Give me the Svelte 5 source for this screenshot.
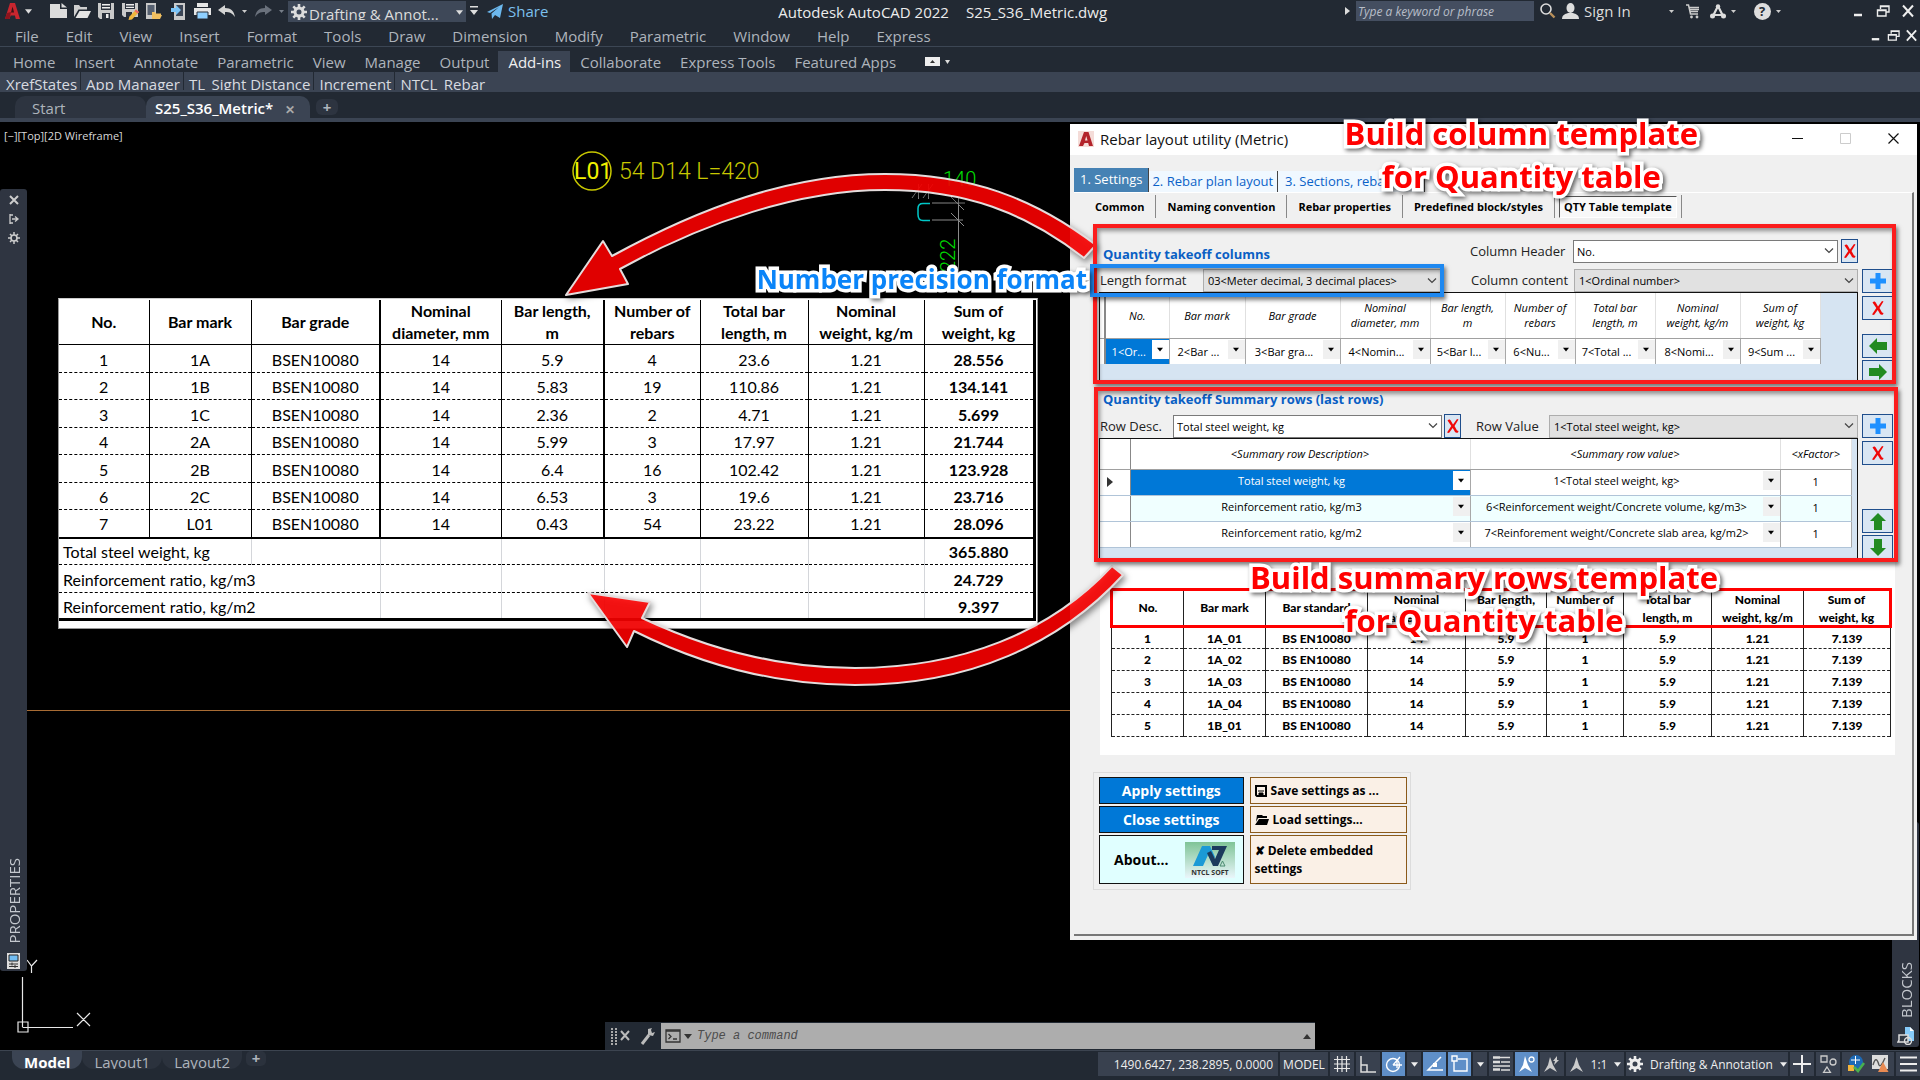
<script lang="ts">
	const menus = ['File', 'Edit', 'View', 'Insert', 'Format', 'Tools', 'Draw', 'Dimension', 'Modify', 'Parametric', 'Window', 'Help', 'Express'];
	const ribbonTabs = ['Home', 'Insert', 'Annotate', 'Parametric', 'View', 'Manage', 'Output', 'Add-ins', 'Collaborate', 'Express Tools', 'Featured Apps'];
	const panels = ['XrefStates', 'App Manager', 'TL_Sight Distance', 'Increment', 'NTCL_Rebar'];

	const quantityHeads = ['No.', 'Bar mark', 'Bar grade', 'Nominal\ndiameter, mm', 'Bar length,\nm', 'Number of\nrebars', 'Total bar\nlength, m', 'Nominal\nweight, kg/m', 'Sum of\nweight, kg'];
	const quantityRows = [
		['1', '1A', 'BSEN10080', '14', '5.9', '4', '23.6', '1.21', '28.556'],
		['2', '1B', 'BSEN10080', '14', '5.83', '19', '110.86', '1.21', '134.141'],
		['3', '1C', 'BSEN10080', '14', '2.36', '2', '4.71', '1.21', '5.699'],
		['4', '2A', 'BSEN10080', '14', '5.99', '3', '17.97', '1.21', '21.744'],
		['5', '2B', 'BSEN10080', '14', '6.4', '16', '102.42', '1.21', '123.928'],
		['6', '2C', 'BSEN10080', '14', '6.53', '3', '19.6', '1.21', '23.716'],
		['7', 'L01', 'BSEN10080', '14', '0.43', '54', '23.22', '1.21', '28.096']
	];
	const summaryRows = [
		{ label: 'Total steel weight, kg', value: '365.880', span: 2 },
		{ label: 'Reinforcement ratio, kg/m3', value: '24.729', span: 3 },
		{ label: 'Reinforcement ratio, kg/m2', value: '9.397', span: 3 }
	];

	const columnContents = ['1<Or...', '2<Bar ...', '3<Bar gra...', '4<Nomin...', '5<Bar l...', '6<Nu...', '7<Total ...', '8<Nomi...', '9<Sum ...'];
	const columnWidths = [64, 76, 95, 90, 75, 70, 80, 85, 80];
	const templateRows = [
		{ desc: 'Total steel weight, kg', value: '1<Total steel weight, kg>' },
		{ desc: 'Reinforcement ratio, kg/m3', value: '6<Reinforcement weight/Concrete volume, kg/m3>' },
		{ desc: 'Reinforcement ratio, kg/m2', value: '7<Reinforement weight/Concrete slab area, kg/m2>' }
	];

	const previewMarks = ['1A_01', '1A_02', '1A_03', '1A_04', '1B_01'];
</script>

<svelte:head>
	<title>Autodesk AutoCAD 2022 - S25_S36_Metric.dwg</title>
</svelte:head>

{#snippet caret()}
	<svg class="caret" width="8" height="5" viewBox="0 0 8 5"><path d="M0 0h8L4 5z" fill="currentColor" /></svg>
{/snippet}

{#snippet chevron()}
	<svg class="chevron" width="10" height="6" viewBox="0 0 10 6"><path d="M1 0.5l4 4 4-4" fill="none" stroke="#444" stroke-width="1.200" /></svg>
{/snippet}

{#snippet gear(size: number)}
	<svg width={size} height={size} viewBox="0 0 16 16">
		<circle cx="8" cy="8" r="4" fill="none" stroke="currentColor" stroke-width="3" />
		<path d="M8 0v4M8 12v4M0 8h4M12 8h4M2.3 2.3l3 3M10.7 10.7l3 3M2.3 13.7l3-3M10.7 5.3l3-3" stroke="currentColor" stroke-width="2.6" />
	</svg>
{/snippet}

{#snippet cross()}
	<svg width="14" height="16" viewBox="0 0 14 16"><path d="M1.500 2.500C3 1 4 1 5 3l2 3.500L11 1l1.500.5L8.500 8l2.500 4.500 1.500.5-.5 1.500c-2 .5-3 0-3.500-1.500L6.700 10 3 15l-2-.5L5.300 8z" fill="#f00808" /></svg>
{/snippet}

{#snippet windowButtons(size: number)}
	<button aria-label="Minimize"><svg width={size} height={size} viewBox="0 0 14 14"><path d="M3 11h8" stroke="#eee" stroke-width="2.500" /></svg></button>
	<button aria-label="Restore"><svg width={size} height={size} viewBox="0 0 14 14"><path d="M4.500 5V2H13v6h-3M1.500 6H10v6H1.500zM1 6.500h9M4 2.500h9" fill="none" stroke="#eee" stroke-width="1.400" /></svg></button>
	<button aria-label="Close"><svg width={size} height={size} viewBox="0 0 14 14"><path d="M2 1.500l10 11M12 1.500l-10 11" stroke="#eee" stroke-width="2" /></svg></button>
{/snippet}

<div class="app">
	<header class="titlebar">
		<div class="quick">
			<button class="logo" aria-label="Application menu">
				<svg width="15" height="16" viewBox="0 0 15 16"><path d="M5 0h5l5 16h-4.200l-.9-3.500H5.700L4.500 16H0z" fill="#c8262f" /><path d="M7.500 3.500l1.600 6H6z" fill="#3a1216" /><path d="M0 16l2-6 4-1-1.500 7z" fill="#8d141d" /></svg>
				{@render caret()}
			</button>
			<button aria-label="New"><svg width="17" height="16" viewBox="0 0 17 16"><path d="M0 1h10v5h7v9H0z" fill="#dcdcdc" /><path d="M11.500 0v4.500H17z" fill="#dcdcdc" /></svg></button>
			<button aria-label="Open"><svg width="17" height="16" viewBox="0 0 17 16"><path d="M0 14V2h5l1.500 2H13v2.500H4.500z" fill="#cfcfcf" /><path d="M5.500 8H17l-3.500 7H1.500z" fill="#e4e4e4" /></svg></button>
			<button aria-label="Save"><svg width="16" height="16" viewBox="0 0 16 16"><path d="M0 0h16v16H2l-2-2z" fill="#c9c9c9" /><path d="M3 0h10v7H3zM4 10h8v6H4z" fill="#2a303b" /><path d="M4 1h8v1.500H4zM4 4h8v1.500H4zM8 11h2.500v4H8z" fill="#eee" /></svg></button>
			<button aria-label="Save as"><svg width="17" height="17" viewBox="0 0 17 17"><path d="M0 0h16v14H2l-2-2z" fill="#c9c9c9" /><path d="M3 0h10v6H3zM4 9h6v5H4z" fill="#2a303b" /><path d="M4 1h8v1.500H4zM4 3.800h8V5H4z" fill="#eee" /><path d="M14 6.500l3 2.500-7 7.500-3.500.5.8-3.300z" fill="#f0b63d" /><path d="M14 6.500l3 2.500-1.500 1.600-3-2.500z" fill="#e66" /></svg></button>
			<button aria-label="Open from mobile"><svg width="16" height="17" viewBox="0 0 16 17"><path d="M0 0h10v16H0z" fill="#c9c9c9" /><path d="M1.500 2h7v10h-7z" fill="#566070" /><path d="M6 16V9h3l1 1.500h5V12l1 0-2 4z" fill="#f2c060" /></svg></button>
			<button aria-label="Save to mobile"><svg width="14" height="17" viewBox="0 0 14 17"><path d="M3 0h11v17H3z" fill="#c9c9c9" /><path d="M5 2h7v11H5z" fill="#3c4656" /><path d="M0 5h5V2l5 5-5 5V9H0z" fill="#7cc4f7" /></svg></button>
			<button aria-label="Plot"><svg width="17" height="16" viewBox="0 0 17 16"><path d="M3 0h11v4H3zM0 5h17v7H0z" fill="#e6e6e6" /><path d="M3 9h11v7H3z" fill="#8fd0ff" stroke="#2a303b" /></svg></button>
			<button aria-label="Undo"><svg width="17" height="12" viewBox="0 0 17 12"><path d="M7 0v3c6 0 9 3 10 9-3-4-5-5-10-5v3L0 5z" fill="#d4d4d4" /></svg></button>
			<span class="tiny">{@render caret()}</span>
			<button class="faded" aria-label="Redo"><svg width="17" height="12" viewBox="0 0 17 12"><path d="M10 0v3C4 3 1 6 0 12c3-4 5-5 10-5v3l7-5z" fill="#6a717c" /></svg></button>
			<span class="tiny faded">{@render caret()}</span>
			<div class="workspace">
				{@render gear(16)}
				<select aria-label="Workspace"><option>Drafting &amp; Annot...</option></select>
				{@render caret()}
			</div>
			<svg class="more" width="8" height="10" viewBox="0 0 8 10"><path d="M0 0h8v1.500H0zM0 4h8L4 9z" fill="#ddd" /></svg>
			<a class="share" href="#share">
				<svg width="16" height="15" viewBox="0 0 16 15"><path d="M0 8L16 0l-3 14-5-3-3 4-.5-5.500L12 3 3 9z" fill="#6cb8ee" /></svg>
				Share
			</a>
		</div>
		<div class="doc-title"><span>Autodesk AutoCAD 2022</span><span>S25_S36_Metric.dwg</span></div>
		<div class="account">
			<svg width="5" height="8" viewBox="0 0 5 8"><path d="M0 0l5 4-5 4z" fill="#ddd" /></svg>
			<input type="text" aria-label="Search help" placeholder="Type a keyword or phrase" />
			<svg width="16" height="16" viewBox="0 0 16 16"><circle cx="6" cy="6" r="5" fill="none" stroke="#ddd" stroke-width="1.600" /><path d="M10 10l4.500 4.500" stroke="#b9905a" stroke-width="2.400" /></svg>
			<a class="signin" href="#signin">
				<svg width="17" height="16" viewBox="0 0 17 16"><ellipse cx="8.500" cy="5" rx="4" ry="5" fill="#ddd" /><path d="M0 16c0-4 3-5 6-6h5c3 1 6 2 6 6z" fill="#ddd" /></svg>
				Sign In
			</a>
			<span class="tiny user-menu">{@render caret()}</span>
			<svg width="14" height="15" viewBox="0 0 14 15"><path d="M0 1h2.500l2 9H12M3.500 3.500H13M4 5.500h9M4.500 7.500H12" fill="none" stroke="#ccc" stroke-width="1.500" /><circle cx="5.500" cy="13" r="1.400" fill="#ccc" /><circle cx="11" cy="13" r="1.400" fill="#ccc" /></svg>
			<svg class="apps" width="16" height="15" viewBox="0 0 16 15"><path d="M8 2L3 12M8 2l5 10M4 11l9 0" stroke="#ddd" stroke-width="2.200" /><circle cx="8" cy="2.500" r="2.200" fill="#ddd" /><circle cx="2.500" cy="12" r="2.500" fill="#ddd" /><circle cx="13.500" cy="12" r="2.500" fill="#ddd" /></svg>
			<span class="tiny">{@render caret()}</span>
			<span class="help">?</span>
			<span class="tiny">{@render caret()}</span>
			<div class="winbtns">{@render windowButtons(14)}</div>
		</div>
	</header>

	<nav class="menubar">
		{#each menus as item (item)}
			<a href="#menu">{item}</a>
		{/each}
		<div class="winbtns small">{@render windowButtons(13)}</div>
	</nav>

	<nav class="ribbon">
		{#each ribbonTabs as tab (tab)}
			<a href="#ribbon" class:active={tab === 'Add-ins'}>{tab}</a>
		{/each}
		<svg width="28" height="9" viewBox="0 0 28 9"><path d="M0 0h15v9H0z" fill="#eee" /><path d="M5 6l2.500-3L10 6z" fill="#333" /><path d="M20 3h5l-2.500 4z" fill="#ddd" /></svg>
	</nav>

	<div class="panels">
		{#each panels as panel (panel)}
			<span>{panel}</span>
		{/each}
	</div>

	<div class="filetabs">
		<a class="filetab" href="#start">Start</a>
		<a class="filetab active" href="#drawing">S25_S36_Metric* <span>✕</span></a>
		<button aria-label="New tab">+</button>
	</div>

	<main class="canvas">
		<p class="view-label">[−][Top][2D Wireframe]</p>

		<svg class="drawing" width="1920" height="928" viewBox="0 122 1920 928">
			<g fill="none" stroke="#c8c800" stroke-width="1.500"><circle cx="592" cy="171" r="19" /></g>
			<text x="574" y="179" class="tag strong">L01</text>
			<text x="619" y="179" class="tag">54 D14 L=420</text>
			<path d="M27 710.500H1892" stroke="#a86c34" />
			<g fill="none" stroke="#8a8a8a">
				<path d="M932 203h33M932 220h31M958.500 197v75M951 197l13 13M951 213l13 13M918.500 184v15M928.500 184v15M912 198l10-14M923 198l10-14" />
				<path d="M930 203.500h-7q-5 0-5 5v6q0 6 5 6h7" stroke="#00c8c8" stroke-width="1.500" />
			</g>
			<text x="943" y="186" class="dim">140</text>
			<text x="0" y="0" class="dim" transform="translate(955 272) rotate(-90)">222</text>
			<g fill="none" stroke="#e8e8e8" stroke-width="1.200">
				<path d="M22.500 977v50M22.500 1027.500H73M18 1022h10v10H18zM77 1013l13 13M90 1013l-13 13M27 960l4.500 6 5.500-6M31.500 966v7" />
			</g>
		</svg>

		<section class="sheet">
			<table>
				<colgroup>
					{#each [90, 102, 129, 121, 103, 96, 108, 116, 110] as width}
						<col style:width="{width}px" />
					{/each}
				</colgroup>
				<thead>
					<tr>
						{#each quantityHeads as head (head)}
							<th>{head}</th>
						{/each}
					</tr>
				</thead>
				<tbody>
					{#each quantityRows as row (row[0])}
						<tr>
							{#each row as cell}
								<td>{cell}</td>
							{/each}
						</tr>
					{/each}
					{#each summaryRows as row (row.label)}
						<tr class="summary">
							<td colspan={row.span}>{row.label}</td>
							{#each { length: 8 - row.span } as _}
								<td></td>
							{/each}
							<td>{row.value}</td>
						</tr>
					{/each}
				</tbody>
			</table>
		</section>

		<aside class="palette properties">
			<svg width="12" height="50" viewBox="0 0 12 50">
				<g fill="none" stroke="#ccc" stroke-width="2">
					<path d="M2 2l8 8M10 2l-8 8" />
					<path d="M2 20v10M2 21h3M2 29h3M4 25h6M7 22.500l3 2.500-3 2.500" stroke-width="1.300" />
					<circle cx="6" cy="44" r="3" stroke-width="1.600" />
					<path d="M6 38v3M6 47v3M0 44h3M9 44h3M2 40l2 2M8 46l2 2M2 48l2-2M8 42l2-2" stroke-width="1.500" />
				</g>
			</svg>
			<span>PROPERTIES</span>
			<svg width="13" height="16" viewBox="0 0 13 16"><path d="M0 0h13v16H0z" fill="#ddd" /><path d="M2 2h9v6H2z" fill="#72bdf2" stroke="#222" /><path d="M2 11h9M2 13.500h9M5 9.500v3M8 12v3" stroke="#333" /></svg>
		</aside>

		<aside class="palette blocks">
			<span>BLOCKS</span>
			<svg width="18" height="18" viewBox="0 0 18 18"><path d="M8 0h5l4 4v10H8z" fill="#86cbfa" /><path d="M13 0l4 4h-4z" fill="#fff" /><path d="M2 8h9v7H1l1-2z" fill="#333a46" stroke="#ddd" stroke-width="1.500" /><circle cx="11" cy="14" r="3.500" fill="none" stroke="#ddd" stroke-width="1.400" /></svg>
		</aside>

		<form class="command">
			<svg width="52" height="22" viewBox="0 0 52 22">
				<path d="M3 3v17M7 3v17" stroke="#aaa" stroke-width="2" stroke-dasharray="2 1" />
				<path d="M12 6l8 9M20 6l-8 9" stroke="#bbb" stroke-width="2" />
				<path d="M33 19l7-9" stroke="#bbb" stroke-width="3" />
				<path d="M39 4v6l5 1 2-4-3 1-1-3 1-2z" fill="#bbb" />
			</svg>
			<label for="command">
				<svg width="28" height="14" viewBox="0 0 28 14"><path d="M1 1h14v12H1z" fill="none" stroke="#333" stroke-width="1.300" /><path d="M1 2h14M3.500 5l2.500 2.500L3.500 10M8 10h4" fill="none" stroke="#333" stroke-width="1.300" /><path d="M19 5h8l-4 5z" fill="#333" /></svg>
			</label>
			<input id="command" type="text" placeholder="Type a command" />
			<svg width="8" height="5" viewBox="0 0 8 5"><path d="M0 5h8L4 0z" fill="#333" /></svg>
		</form>

		<section class="dialog">
			<header>
				<svg width="16" height="16" viewBox="0 0 16 16"><path d="M0 0h16v16H0z" fill="#f4dcd8" /><path d="M6 1h4.500L15 15h-4l-.8-3H6.500L5 15H1z" fill="#b3232b" /><path d="M8.200 5l1.400 4.500H7z" fill="#f4dcd8" /></svg>
				<h1>Rebar layout utility (Metric)</h1>
				<button aria-label="Minimize dialog"><svg width="11" height="11" viewBox="0 0 11 11"><path d="M0 5.500h11" stroke="#111" /></svg></button>
				<button disabled aria-label="Maximize dialog"><svg width="11" height="11" viewBox="0 0 11 11"><path d="M.5.500h10v10H.500z" fill="none" stroke="#ccc" /></svg></button>
				<button aria-label="Close dialog"><svg width="11" height="11" viewBox="0 0 11 11"><path d="M.5.500l10 10M10.500.500l-10 10" stroke="#111" stroke-width="1.200" /></svg></button>
			</header>

			<nav class="main-tabs">
				<a href="#settings" class="active">1. Settings</a>
				<a href="#plan">2. Rebar plan layout</a>
				<a href="#sections">3. Sections, rebar lists,</a>
			</nav>

			<div class="frame">
				<nav class="sub-tabs">
					<a href="#common">Common</a>
					<a href="#naming">Naming convention</a>
					<a href="#properties">Rebar properties</a>
					<a href="#predefined">Predefined block/styles</a>
					<a href="#qty" class="active"><span>QTY Table template</span></a>
				</nav>

				<section class="block columns-block">
					<div class="fields">
						<div class="line">
							<h2>Quantity takeoff columns</h2>
							<label class="w-label" for="col-header">Column Header</label>
							<div class="pick white w-header">
								<select id="col-header"><option>No.</option></select>
								{@render chevron()}
							</div>
							<button class="tool slim" aria-label="Clear header">{@render cross()}</button>
						</div>
						<div class="line second">
							<label class="w-label" for="length-format">Length format</label>
							<div class="pick w-length">
								<select id="length-format"><option>03&lt;Meter decimal, 3 decimal places&gt;</option></select>
								{@render chevron()}
							</div>
							<label class="w-label push" for="col-content">Column content</label>
							<div class="pick w-content">
								<select id="col-content"><option>1&lt;Ordinal number&gt;</option></select>
								{@render chevron()}
							</div>
						</div>
						<div class="gridbox">
							<table class="columns-grid">
								<thead>
									<tr>
										<th class="stub"></th>
										{#each quantityHeads as head, i (head)}
											<th style:width="{columnWidths[i]}px">{head}</th>
										{/each}
									</tr>
								</thead>
								<tbody>
									<tr>
										<td class="stub"></td>
										{#each columnContents as content, i (content)}
											<td class:selected={i === 0}>
												<div class="cell">
													<select aria-label="Content of column {i + 1}"><option>{content}</option></select>
													<span class="drop">{@render caret()}</span>
												</div>
											</td>
										{/each}
									</tr>
								</tbody>
							</table>
						</div>
					</div>
					<div class="tools">
						<button class="tool" aria-label="Add column"><svg width="16" height="16" viewBox="0 0 16 16"><path d="M5.500 0h5v5.500H16v5h-5.500V16h-5v-5.500H0v-5h5.500z" fill="#1e90ff" /></svg></button>
						<button class="tool" aria-label="Delete column">{@render cross()}</button>
						<button class="tool apart" aria-label="Move column left"><svg width="18" height="16" viewBox="0 0 18 16"><path d="M0 8l8-8v4h10v8H8v4z" fill="#228b22" /></svg></button>
						<button class="tool tight" aria-label="Move column right"><svg width="18" height="16" viewBox="0 0 18 16"><path d="M18 8l-8-8v4H0v8h10v4z" fill="#228b22" /></svg></button>
					</div>
				</section>

				<section class="block rows-block">
					<div class="fields">
						<h2>Quantity takeoff Summary rows (last rows)</h2>
						<div class="line">
							<label class="w-row" for="row-desc">Row Desc.</label>
							<div class="pick white w-desc">
								<select id="row-desc"><option>Total steel weight, kg</option></select>
								{@render chevron()}
							</div>
							<button class="tool slim" aria-label="Clear description">{@render cross()}</button>
							<label class="w-row push-label" for="row-value">Row Value</label>
							<div class="pick grow">
								<select id="row-value"><option>1&lt;Total steel weight, kg&gt;</option></select>
								{@render chevron()}
							</div>
						</div>
						<div class="gridbox">
							<table class="rows-grid">
								<thead>
									<tr>
										<th class="marker"></th>
										<th class="desc">&lt;Summary row Description&gt;</th>
										<th class="value">&lt;Summary row value&gt;</th>
										<th class="factor">&lt;xFactor&gt;</th>
									</tr>
								</thead>
								<tbody>
									{#each templateRows as row, i (row.desc)}
										<tr>
											<td class="marker">
												{#if i === 0}
													<svg width="6" height="10" viewBox="0 0 6 10"><path d="M0 0l6 5-6 5z" fill="#333" /></svg>
												{/if}
											</td>
											<td class:selected={i === 0}>
												<div class="cell">
													<select aria-label="Summary row description"><option>{row.desc}</option></select>
													<span class="drop">{@render caret()}</span>
												</div>
											</td>
											<td>
												<div class="cell">
													<select aria-label="Summary row value"><option>{row.value}</option></select>
													<span class="drop">{@render caret()}</span>
												</div>
											</td>
											<td class="factor">1</td>
										</tr>
									{/each}
								</tbody>
							</table>
						</div>
					</div>
					<div class="tools">
						<button class="tool" aria-label="Add row"><svg width="16" height="16" viewBox="0 0 16 16"><path d="M5.500 0h5v5.500H16v5h-5.500V16h-5v-5.500H0v-5h5.500z" fill="#1e90ff" /></svg></button>
						<button class="tool" aria-label="Delete row">{@render cross()}</button>
						<button class="tool far" aria-label="Move row up"><svg width="16" height="17" viewBox="0 0 16 17"><path d="M8 0l8 8h-4v9H4V8H0z" fill="#228b22" /></svg></button>
						<button class="tool tight" aria-label="Move row down"><svg width="16" height="17" viewBox="0 0 16 17"><path d="M8 17l8-8h-4V0H4v9H0z" fill="#228b22" /></svg></button>
					</div>
				</section>

				<section class="preview">
					<table>
						<colgroup>
							{#each [72, 82, 102, 98, 81, 77, 88, 92, 87] as width}
								<col style:width="{width}px" />
							{/each}
						</colgroup>
						<thead>
							<tr>
								{#each quantityHeads as head, i (head)}
									<th><div>{i === 2 ? 'Bar standard' : head}</div></th>
								{/each}
							</tr>
						</thead>
						<tbody>
							{#each previewMarks as mark, i (mark)}
								<tr>
									<td>{i + 1}</td>
									<td>{mark}</td>
									<td>BS EN10080</td>
									<td>14</td>
									<td>5.9</td>
									<td>1</td>
									<td>5.9</td>
									<td>1.21</td>
									<td>7.139</td>
								</tr>
							{/each}
						</tbody>
					</table>
				</section>

				<div class="actions">
					<div class="stack">
						<button class="primary">Apply settings</button>
						<button class="primary">Close settings</button>
						<button class="about">
							About...
							<svg width="50" height="36" viewBox="0 0 50 36">
								<defs>
									<linearGradient id="sky" x1="0" y1="0" x2="0" y2="1"><stop offset="0" stop-color="#7fc497" /><stop offset="1" stop-color="#eaf6fb" /></linearGradient>
								</defs>
								<path d="M0 0h50v36H0z" fill="url(#sky)" />
								<path d="M8 24L17 4h8l5 11-3 6-4-8-5 11z" fill="#1b9ad6" />
								<path d="M22 11l6 13h5l9-20H27v4h7l-4 9-4-8z" fill="#1c3a5c" />
								<path d="M35 24l2.500-5 2.500 5z" fill="none" stroke="#4a8a70" />
								<text x="25" y="33" text-anchor="middle" class="mark">NTCL SOFT</text>
							</svg>
						</button>
					</div>
					<div class="stack files">
						<button><svg width="12" height="12" viewBox="0 0 12 12"><path d="M1 1h10v10H2l-1-1z" fill="none" stroke="#000" stroke-width="2" /><path d="M3 6h6M4 8h4v3H4z" stroke="#000" /></svg>Save settings as ...</button>
						<button><svg width="14" height="10" viewBox="0 0 14 10"><path d="M2 0h5l1 1h4v2H3L1 7zM4 4h10l-2 6H0z" fill="#000" /></svg>Load settings...</button>
						<button class="tall">✘ Delete embedded settings</button>
					</div>
				</div>
			</div>
		</section>

		<svg class="arrows" width="1920" height="928" viewBox="0 122 1920 928">
			<g fill="#ff0000" fill-opacity="0.88" stroke="#e4dcdc" stroke-width="2" stroke-linejoin="round">
				<path d="M566 295L603 241L612 256C700 208 790 174 885 174C970 174 1034 198 1096 245L1084 258C1025 212 965 190 885 190C800 190 705 222 620 269L628 284Z" />
				<path d="M588 593L650 602L642 618C710 650 780 668 855 668C960 668 1050 633 1112 566L1123 575C1060 644 970 685 855 685C775 685 700 664 634 631L627 647Z" />
			</g>
		</svg>
		<div class="outline red first"></div>
		<div class="outline red second"></div>
		<div class="outline blue"></div>
		<p class="callout top">Build column template<br />for Quantity table</p>
		<p class="callout bottom">Build summary rows template<br />for Quantity table</p>
		<p class="callout precision">Number precision format</p>
	</main>

	<footer>
		<nav class="layouts">
			<a href="#model" class="active">Model</a>
			<a href="#layout1">Layout1</a>
			<a href="#layout2">Layout2</a>
			<button aria-label="Add layout">+</button>
		</nav>
		<div class="status">
			<span class="coords">1490.6427, 238.2895, 0.0000</span>
			<button class="model">MODEL</button>
			<button class="icon" aria-label="Grid"><svg width="16" height="16" viewBox="0 0 16 16"><path d="M3.500 0v16M8 0v16M12.500 0v16M0 3.500h16M0 8h16M0 12.500h16" stroke="#e6e6e6" stroke-width="1.200" /></svg></button>
			<button class="icon" aria-label="Ortho"><svg width="16" height="18" viewBox="0 0 16 18"><path d="M1 1v16h15M1 10h6v7" fill="none" stroke="#ddd" stroke-width="1.500" /></svg></button>
			<button class="icon on" aria-label="Polar tracking"><svg width="18" height="18" viewBox="0 0 18 18"><circle cx="8" cy="10" r="6.500" fill="none" stroke="#fff" stroke-width="1.400" /><path d="M8 10l7-8M8 10h9M12 5v8" stroke="#fff" stroke-width="1.300" /></svg></button>
			<span class="arrow">{@render caret()}</span>
			<button class="icon on" aria-label="Object snap tracking"><svg width="18" height="16" viewBox="0 0 18 16"><path d="M15 1L2 14h15" fill="none" stroke="#fff" stroke-width="1.500" /><path d="M7 7h4v4H7z" fill="#fff" /></svg></button>
			<button class="icon on" aria-label="Object snap"><svg width="18" height="18" viewBox="0 0 18 18"><path d="M3 6v10h13V4H7M1 1h5v5H1z" fill="none" stroke="#fff" stroke-width="1.400" /></svg></button>
			<span class="arrow">{@render caret()}</span>
			<button class="icon" aria-label="Lineweight"><svg width="17" height="16" viewBox="0 0 17 16"><path d="M0 1.500h7M0 6h7M0 13.500h7" stroke="#ddd" stroke-width="2.600" /><path d="M7 1.500h10M8 6h9M0 10h17M8 14h9" stroke="#ddd" stroke-width="1.300" /></svg></button>
			<button class="icon on" aria-label="Annotation visibility"><svg width="18" height="18" viewBox="0 0 18 18"><path d="M7 1l3 9 4 7-7-4-6 4 4-7z" fill="#fff" /><circle cx="13.500" cy="4.500" r="2.500" fill="none" stroke="#fff" stroke-width="1.300" /></svg></button>
			<button class="icon" aria-label="Auto scale"><svg width="18" height="18" viewBox="0 0 18 18"><path d="M7 2l3 8 4 7-7-4-6 4 4-7zM14 1l-4 5h2l-1 4 5-5h-2z" fill="#ccc" /></svg></button>
			<button class="scale"><svg width="15" height="18" viewBox="0 0 15 18"><path d="M7.500 2l2.500 8 4 7-6.500-4L1 17l4-7z" fill="#ccc" /></svg>1:1 {@render caret()}</button>
			<button class="space">{@render gear(16)}Drafting &amp; Annotation {@render caret()}</button>
			<button class="icon" aria-label="Annotation monitor"><svg width="18" height="18" viewBox="0 0 18 18"><path d="M9 0v18M0 9h18" stroke="#eee" stroke-width="2" /></svg></button>
			<button class="icon" aria-label="Isolate objects"><svg width="17" height="18" viewBox="0 0 17 18"><path d="M1 1h6v6H1zM7 12l3.500 5.500h-7z" fill="none" stroke="#ccc" stroke-width="1.300" /><circle cx="13" cy="7" r="3" fill="none" stroke="#ccc" stroke-width="1.300" /></svg></button>
			<button class="icon wide" aria-label="Performance">
				<svg width="17" height="18" viewBox="0 0 17 18"><circle cx="8" cy="7" r="7" fill="#1c69b5" /><path d="M0 10h6v6H0z" fill="#f2b43c" /><path d="M3 5h9M7.500 1v8" stroke="#fff" /><path d="M6 12l4 4 6-8" fill="none" stroke="#49b04e" stroke-width="2.600" /></svg>
				<svg width="17" height="18" viewBox="0 0 17 18"><path d="M0 0h16v14H0z" fill="#ddd" /><path d="M1 10c2-7 4-7 6 0 1 2 3 0 6-7" fill="none" stroke="#555" stroke-width="1.400" /><path d="M11 7l5.500 10H6z" fill="#e98a52" /></svg>
			</button>
			<button class="icon" aria-label="Customization"><svg width="17" height="16" viewBox="0 0 17 16"><path d="M0 1.500h17M0 8h17M0 14.500h17" stroke="#eee" stroke-width="2" /></svg></button>
		</div>
	</footer>
</div>

<style>
	:global(body) {
		background: #000;
	}

	.app {
		display: flex;
		flex-direction: column;
		min-height: 100vh;
		overflow: hidden;
		background: #222933;
		color: #aeb4bc;
		font-family: 'Open Sans', 'Noto Sans', sans-serif;
		font-size: 15px;
	}

	.app * {
		box-sizing: border-box;
	}

	a {
		color: inherit;
		text-decoration: none;
		white-space: nowrap;
	}

	button,
	input,
	select {
		margin: 0;
		padding: 0;
		border: 0;
		border-radius: 0;
		background: none;
		color: inherit;
		font: inherit;
		appearance: none;
		outline: 0;
	}

	svg {
		flex: none;
		display: block;
	}

	.caret {
		width: 7px;
	}

	/* title bar */
	.titlebar {
		display: flex;
		height: 22px;
	}

	.quick,
	.account {
		display: flex;
		align-items: center;
		height: 22px;
	}

	.quick > button {
		display: grid;
		place-items: center;
		width: 24px;
		height: 20px;
	}

	.quick .logo {
		display: flex;
		justify-content: flex-start;
		gap: 5px;
		width: 46px;
		padding-left: 5px;
		color: #ddd;
	}

	.tiny {
		display: grid;
		place-items: center;
		width: 13px;
		color: #ccc;
	}

	.tiny .caret {
		width: 5px;
	}

	.tiny.faded {
		color: #777e88;
	}

	.workspace {
		display: flex;
		align-items: flex-start;
		width: 178px;
		height: 21px;
		padding: 0 3px;
		overflow: hidden;
		border-bottom: 2px solid #3e4858;
		background: #3e4858;
		color: #dcdcdc;
	}

	.workspace > :global(svg:first-child) {
		margin-top: 3px;
	}

	.workspace select {
		flex: 1;
		height: 27px;
		margin-left: 2px;
	}

	.workspace .caret {
		margin-top: 9px;
	}

	.more {
		margin: 0 9px 0 4px;
	}

	.share {
		display: flex;
		align-items: center;
		gap: 5px;
		color: #7cc0ee;
	}

	.doc-title {
		flex: 1;
		display: flex;
		justify-content: center;
		align-items: center;
		gap: 17px;
		padding-top: 2px;
		color: #ececec;
		white-space: pre;
	}

	.account {
		gap: 6px;
		width: 575px;
		margin-left: 4px;
	}

	.titlebar .doc-title {
		padding-right: 8px;
		margin-right: -4px;
	}

	.account input {
		width: 178px;
		height: 20px;
		padding: 0 2px;
		background: #444e60;
		font-size: 12px;
		font-style: italic;
	}

	.account input::placeholder {
		color: #b8bec8;
		opacity: 1;
	}

	.signin {
		display: flex;
		align-items: center;
		gap: 5px;
		color: #ddd;
	}

	.user-menu {
		margin: 0 2px 0 28px;
	}

	.apps {
		margin-left: 4px;
		margin-right: -5px;
	}

	.help {
		width: 17px;
		height: 17px;
		margin-left: 8px;
		margin-right: -5px;
		border-radius: 50%;
		background: #ddd;
		color: #222933;
		font-size: 13px;
		font-weight: 700;
		line-height: 17px;
		text-align: center;
	}

	.winbtns {
		display: flex;
		margin-left: auto;
	}

	.winbtns button {
		display: grid;
		place-items: center;
		width: 25px;
		height: 22px;
	}

	.winbtns.small button {
		width: 18px;
	}

	/* menus and ribbon */
	.menubar,
	.ribbon {
		display: flex;
		align-items: center;
		gap: 27px;
		height: 25px;
		padding-left: 15px;
		border-bottom: 1px solid #3c4654;
	}

	.menubar {
		padding-top: 3px;
	}

	.ribbon {
		gap: 0;
		padding: 3px 0 0 3px;
		border: 0;
	}

	.ribbon a {
		height: 21px;
		padding: 0 9px 0 10px;
		line-height: 22px;
	}

	.ribbon a.active {
		background: #3b4453;
		color: #f0f0f0;
	}

	.ribbon svg {
		margin-left: 20px;
	}

	.panels {
		display: flex;
		height: 20px;
		padding: 0 0 2px 1px;
		background: #3b4453;
		color: #d8dbe0;
	}

	.panels span {
		height: 18px;
		padding: 0 3px 0 5px;
		overflow: hidden;
		border-right: 1px solid #222933;
		line-height: 25px;
	}

	.panels span:last-child {
		border: 0;
	}

	.filetabs {
		display: flex;
		align-items: flex-end;
		height: 30px;
		padding-left: 15px;
		border-bottom: 4px solid #3b4453;
	}

	.filetab {
		width: 131px;
		height: 22px;
		padding-left: 17px;
		border-radius: 10px 10px 0 0;
		background: #2d3440;
		line-height: 24px;
	}

	.filetab.active {
		width: 164px;
		padding-left: 9px;
		background: #3b4453;
		color: #fff;
		font-weight: 600;
	}

	.filetab span {
		margin-left: 8px;
		color: #aaa;
		font-size: 12px;
	}

	.filetabs button {
		width: 22px;
		height: 16px;
		margin: 0 0 3px 6px;
		border-radius: 6px;
		background: #2d3440;
		font-weight: 700;
		line-height: 14px;
	}

	/* drawing area */
	.canvas {
		position: relative;
		flex: 1;
		min-height: 928px;
		background: #000;
	}

	.view-label {
		margin: 0;
		padding: 5px 4px;
		color: #d8d8d8;
		font-size: 11px;
		line-height: 18px;
	}

	.drawing,
	.arrows {
		position: absolute;
		top: 0;
		left: 0;
		pointer-events: none;
	}

	.arrows {
		filter: drop-shadow(2px 3px 3px rgba(0, 0, 0, 0.5));
	}

	.tag,
	.dim {
		fill: #c8c800;
		font-family: Roboto, sans-serif;
		font-size: 23px;
		font-weight: 300;
	}

	.strong {
		fill: #f0f000;
		font-weight: 400;
	}

	.dim {
		fill: #00e000;
		font-size: 20px;
	}

	.sheet {
		position: absolute;
		top: 176px;
		left: 58px;
		width: 980px;
		height: 331px;
		padding-top: 1px;
		border: 1px solid #999;
		border-top-color: #ccc;
		background: #fff;
		color: #000;
		font-family: Lato, Carlito, sans-serif;
		font-size: 16px;
	}

	table {
		border-collapse: collapse;
		table-layout: fixed;
	}

	th {
		white-space: pre-line;
	}

	.sheet table {
		width: 975px;
		border-right: 3px solid #000;
		border-bottom: 3px solid #000;
	}

	.sheet th,
	.sheet td {
		height: 27px;
		padding: 2px 0 0;
		border-right: 1px solid #000;
		border-bottom: 1px dashed #000;
		line-height: 22px;
		text-align: center;
	}

	.sheet tr:nth-child(odd) td {
		height: 28px;
	}

	.sheet th {
		height: 44px;
		padding: 0;
		border-bottom-style: solid;
	}

	.sheet th:nth-child(3),
	.sheet th:nth-child(5),
	.sheet tr:not(.summary) td:nth-child(3),
	.sheet tr:not(.summary) td:nth-child(5) {
		border-right-width: 2px;
	}

	.sheet td:last-child {
		border-left: 1px solid #000;
		border-right: 3px solid #000;
		font-weight: 700;
	}

	.sheet tr:nth-child(7) td {
		border-bottom: 2px solid #000;
	}

	.sheet .summary td:not(:last-child) {
		border-right-color: #d4d6da;
	}

	.sheet .summary td:first-child {
		padding-left: 4px;
		text-align: left;
	}

	.sheet .summary:last-child td {
		border-bottom: 3px solid #000;
	}

	.palette {
		position: absolute;
		left: 0;
		display: flex;
		flex-direction: column;
		align-items: center;
		width: 27px;
		background: #2f3541;
		border-radius: 3px;
		color: #c4c8ce;
	}

	.palette span {
		margin-top: auto;
		writing-mode: vertical-rl;
		transform: rotate(180deg);
	}

	.properties {
		top: 67px;
		height: 782px;
		padding: 5px 0 2px;
	}

	.properties span {
		margin-bottom: 9px;
	}

	.blocks {
		right: 1px;
		left: auto;
		top: 700px;
		height: 225px;
		padding-bottom: 2px;
	}

	.blocks span {
		margin-bottom: 9px;
	}

	.command {
		position: absolute;
		left: 605px;
		bottom: 0;
		display: flex;
		align-items: center;
		width: 710px;
		height: 28px;
		padding-left: 4px;
		border: 1px solid #222933;
		border-width: 1px 0;
		background: linear-gradient(90deg, #222933 56px, #adadad 56px);
	}

	.command label {
		padding: 0 4px;
	}

	.command input {
		flex: 1;
		font-family: 'Liberation Mono', monospace;
		font-size: 12px;
		font-style: italic;
	}

	.command input::placeholder {
		color: #4c4c4c;
		opacity: 1;
	}

	.command > svg:last-child {
		margin-right: 4px;
	}

	/* rebar dialog */
	.dialog {
		position: absolute;
		top: 2px;
		right: 3px;
		display: flex;
		flex-direction: column;
		width: 847px;
		height: 816px;
		background: #f0f0f0;
		color: #222;
		font-size: 11px;
	}

	.dialog header {
		display: flex;
		align-items: center;
		height: 31px;
		padding: 0 0 2px 8px;
		background: #fff;
	}

	h1 {
		flex: 1;
		margin: 0;
		padding-left: 6px;
		color: #111;
		font-size: 15px;
		font-weight: 400;
		line-height: 20px;
	}

	.dialog header button {
		display: grid;
		place-items: center;
		width: 48px;
		height: 29px;
	}

	.main-tabs {
		display: flex;
		align-items: flex-end;
		height: 37px;
		padding-left: 4px;
		color: #0a62c8;
		font-size: 13px;
	}

	.main-tabs a {
		height: 21px;
		padding: 0 4px 0 3px;
		border-right: 1px solid #444;
		background: #f0f8ff;
		line-height: 20px;
	}

	.main-tabs a.active {
		height: 24px;
		padding: 0 6px;
		background: #4682b4;
		color: #fff;
		line-height: 22px;
	}

	.main-tabs a:last-child {
		padding-left: 7px;
	}

	.frame {
		flex: 1;
		display: flex;
		flex-direction: column;
		margin: 0 3px 4px 4px;
		border-right: 2px solid #777;
		border-bottom: 2px solid #777;
		border-top: 1px solid #fff;
	}

	.sub-tabs {
		display: flex;
		align-items: flex-start;
		height: 30px;
		padding: 2px 0 0 10px;
		color: #000;
		font-weight: 700;
	}

	.sub-tabs a {
		height: 23px;
		padding: 0 11px;
		border-right: 1px solid #888;
		line-height: 23px;
	}

	.sub-tabs a.active {
		padding: 1px 4px 0;
	}

	.sub-tabs span {
		display: block;
		padding: 0 4px;
		border: 1px solid #fff;
		border-top-color: #555;
		border-left-color: #555;
		background: #f8f8f8;
		line-height: 20px;
	}

	.block {
		display: flex;
		gap: 4px;
		padding-left: 25px;
	}

	.columns-block {
		height: 161px;
		padding-top: 16px;
	}

	.rows-block {
		height: 178px;
		padding-top: 4px;
	}

	.fields {
		width: 759px;
	}

	h2 {
		flex: 1;
		margin: 0;
		padding-left: 4px;
		color: #0a5fc4;
		font-size: 13px;
		font-weight: 700;
		line-height: 24px;
	}

	.columns-block h2 {
		padding-top: 5px;
	}

	.rows-block h2 {
		height: 26px;
		line-height: 23px;
	}

	.line {
		display: flex;
		align-items: center;
		height: 24px;
	}

	.line.second {
		margin: 6px 0 0;
		height: 23px;
	}

	.line label {
		flex: none;
		padding-left: 1px;
		font-size: 13px;
		line-height: 16px;
		padding-bottom: 1px;
	}

	.w-label {
		width: 104px;
	}

	.w-row {
		width: 74px;
	}

	.push {
		margin-left: auto;
	}

	.push-label {
		margin-left: 14px;
	}

	.pick {
		display: grid;
		align-items: center;
		height: 23px;
		border: 1px solid #adadad;
		background: #e1e1e1;
		color: #000;
	}

	.pick > :global(*) {
		grid-area: 1 / 1;
	}

	.pick select {
		height: 21px;
		padding-left: 4px;
	}

	.pick.white {
		border-color: #7a7a7a;
		background: #fff;
	}

	.pick.white select {
		padding-left: 3px;
	}

	.chevron {
		justify-self: end;
		margin-right: 3px;
		pointer-events: none;
	}

	.w-header {
		width: 265px;
		margin-right: 3px;
	}

	.w-length {
		width: 238px;
	}

	.w-content {
		width: 284px;
	}

	.w-desc {
		width: 269px;
		margin-right: 2px;
	}

	.grow {
		flex: 1;
	}

	.tool {
		display: grid;
		place-items: center;
		width: 31px;
		height: 24px;
		border: 1px solid #1f4e8c;
		background: #d9e6f3;
	}

	.tool.slim {
		width: 17px;
	}

	.tools {
		display: flex;
		flex-direction: column;
		gap: 3px;
		padding-top: 30px;
	}

	.rows-block .tools {
		padding-top: 26px;
	}

	.tool.apart {
		margin-top: 11px;
	}

	.tool.far {
		margin-top: 41px;
	}

	.tool.tight {
		margin-top: -1px;
	}

	.gridbox {
		height: 91px;
		border: 1px solid #111;
		border-bottom: 0;
		background: #d6e4f2;
		color: #000;
	}

	.rows-block .gridbox {
		height: 122px;
	}

	.columns-grid {
		width: 720px;
	}

	.gridbox th,
	.gridbox td {
		padding: 0;
		border-right: 1px solid #a8a8a8;
		background: #fff;
	}

	.gridbox th {
		border-right-color: #e0e0e0;
		border-bottom: 1px solid #a0a0a0;
		font-style: italic;
		font-weight: 400;
		line-height: 15px;
	}

	.columns-grid th {
		height: 45px;
	}

	.columns-grid td {
		height: 26px;
	}

	.gridbox .stub {
		width: 5px;
		border-right: 2px solid #888;
	}

	.cell {
		display: flex;
		height: 24px;
	}

	.cell select {
		flex: 1;
		height: 22px;
		min-width: 0;
		text-align-last: center;
	}

	.columns-grid select {
		height: 24px;
	}

	.drop {
		display: grid;
		place-items: center;
		width: 17px;
		height: 19px;
		margin: 1px 0 0;
		background: #f0f0f0;
		color: #000;
	}

	.drop .caret {
		width: 6px;
	}

	.gridbox td.selected {
		background: #0078d7;
		color: #fff;
	}

	.selected .drop {
		background: #fff;
	}

	.rows-grid {
		width: 752px;
	}

	.rows-grid th {
		height: 30px;
	}

	.rows-grid td {
		height: 26px;
		border-bottom: 1px solid #b0c4d8;
		line-height: 22px;
		text-align: center;
	}

	.rows-grid tr:nth-child(2) td:not(.marker) {
		background: #f0ffff;
	}

	.rows-grid .marker {
		width: 30px;
		border-right-color: #888;
	}

	.marker svg {
		margin-left: 7px;
	}

	.rows-grid .desc {
		width: 340px;
	}

	.rows-grid .value {
		width: 310px;
	}

	.preview {
		width: 795px;
		height: 193px;
		margin-left: 26px;
		padding: 26px 0 0 10px;
		background: #fff;
		color: #000;
		font-family: Lato, Carlito, sans-serif;
		font-size: 12px;
	}

	.preview table {
		width: 779px;
	}

	.preview th,
	.preview td {
		height: 22px;
		padding: 0;
		border: 1px solid #222;
		border-bottom-style: dashed;
		font-weight: 900;
		text-align: center;
	}

	.preview tbody tr:not(:first-child) td {
		border-top-style: dashed;
	}

	.preview thead {
		border: 3px solid #f00;
	}

	.preview th {
		height: 37px;
		border-top: 3px solid #f00;
		border-bottom: 3px solid #f00;
	}

	.preview th div {
		max-height: 34px;
		overflow: hidden;
		line-height: 18px;
	}

	.actions {
		display: flex;
		gap: 6px;
		width: 318px;
		height: 118px;
		margin: 17px 0 0 19px;
		padding: 4px 3px 5px 5px;
		border: 1px solid #dcdcdc;
		color: #000;
	}

	.stack {
		display: flex;
		flex-direction: column;
		gap: 2px;
		width: 145px;
	}

	.stack button {
		height: 27px;
		border: 1px solid #111;
		font-size: 14px;
		font-weight: 700;
	}

	.stack .primary {
		background: #0078d7;
		color: #fff;
	}

	.stack .about {
		display: flex;
		justify-content: space-between;
		align-items: center;
		height: 49px;
		padding: 0 8px 0 14px;
		background: #e0ffff;
	}

	.mark {
		fill: #333;
		font-size: 7px;
		font-weight: 700;
	}

	.files {
		width: 158px;
	}

	.stack.files button {
		display: flex;
		align-items: center;
		gap: 4px;
		padding: 0 4px;
		border-color: #8b5a1a;
		background: #faf0e6;
		font-size: 12px;
		text-align: left;
	}

	.files .tall {
		height: 49px;
		line-height: 18px;
	}

	/* annotations over the drawing */
	.outline {
		position: absolute;
		border: 4px solid #fb1c1c;
		box-shadow: 2px 3px 4px rgba(0, 0, 0, 0.5), inset 2px 3px 4px rgba(0, 0, 0, 0.4);
		pointer-events: none;
	}

	.first {
		top: 102px;
		right: 24px;
		width: 803px;
		height: 160px;
	}

	.second.red {
		top: 265px;
		right: 22px;
		width: 804px;
		height: 175px;
	}

	.blue {
		top: 142px;
		right: 476px;
		width: 354px;
		height: 33px;
		border-color: #1e88f0;
	}

	.callout {
		position: absolute;
		margin: 0;
		color: #f00;
		font-size: 31px;
		font-weight: 700;
		line-height: 43px;
		text-align: center;
		white-space: nowrap;
		-webkit-text-stroke: 7px #fff;
		paint-order: stroke fill;
		filter: drop-shadow(2px 2px 2px rgba(0, 0, 0, 0.6));
		pointer-events: none;
	}

	.top {
		top: -10px;
		right: 222px;
	}

	.bottom {
		top: 434px;
		right: 202px;
	}

	.precision {
		top: 136px;
		right: 833px;
		color: #0a84f8;
		font-size: 26px;
	}

	/* status bar */
	footer {
		display: flex;
		justify-content: space-between;
		height: 30px;
		border-top: 1px solid #3c4450;
		background: #222933;
	}

	.layouts {
		display: flex;
		height: 18px;
		padding-left: 12px;
		overflow: hidden;
		line-height: 23px;
	}

	.layouts a {
		padding: 0 12px;
		border-radius: 0 0 12px 12px;
		background: #2b323d;
	}

	.layouts a.active {
		background: #3b4453;
		color: #fff;
		font-weight: 700;
	}

	.layouts button {
		width: 20px;
		height: 15px;
		margin-left: 4px;
		border-radius: 5px;
		background: #2b323d;
		font-weight: 700;
		line-height: 15px;
	}

	.status {
		display: flex;
		gap: 2px;
		height: 25px;
		padding-top: 1px;
		color: #eee;
		font-size: 12px;
	}

	.status > * {
		display: flex;
		justify-content: center;
		align-items: center;
		background: #39414f;
	}

	.coords {
		justify-content: flex-end;
		width: 180px;
		padding-right: 5px;
	}

	.model {
		width: 48px;
	}

	.icon {
		width: 24px;
	}

	.status .on {
		width: 23px;
		background: #5f8fc8;
	}

	.arrow {
		width: 14px;
	}

	.scale {
		gap: 7px;
		width: 58px;
	}

	.space {
		gap: 7px;
		width: 162px;
	}

	.status .wide {
		gap: 7px;
		width: 52px;
	}
</style>
